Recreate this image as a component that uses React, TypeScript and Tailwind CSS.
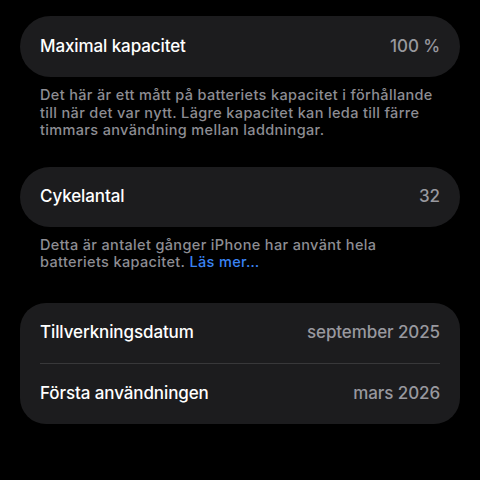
import React from "react";

const font = { fontFamily: "Inter, 'Noto Sans', sans-serif" };

function Row({ label, value, h = "h-[60px]" }: { label: string; value: string; h?: string }) {
    return (
        <div className={`flex items-center justify-between px-5 ${h}`}>
            <span className="text-[17px] font-medium text-white tracking-[-0.1px]">{label}</span>
            <span className="text-[17px] font-medium text-[#98989e] tracking-[-0.1px]">{value}</span>
        </div>
    );
}

export default function App() {
    return (
        <div className="w-[480px] h-[480px] bg-black overflow-hidden px-5 pt-4" style={font}>
            {/* Max capacity */}
            <div className="bg-[#1c1c1e] rounded-full">
                <Row label="Maximal kapacitet" value="100 %" h="h-[61px]" />
            </div>
            <p className="px-5 pt-[9px] text-[14.5px] leading-[17.5px] font-medium tracking-[0.35px] text-[#8d8d93]">
                Det här är ett mått på batteriets kapacitet i förhållande till när det var nytt. Lägre kapacitet kan leda till färre timmars användning mellan laddningar.
            </p>

            {/* Cycle count */}
            <div className="bg-[#1c1c1e] rounded-full mt-[28px]">
                <Row label="Cykelantal" value="32" />
            </div>
            <p className="px-5 pt-[9px] pr-12 text-[14.5px] leading-[17.5px] font-medium tracking-[0.35px] text-[#8d8d93]">
                Detta är antalet gånger iPhone har använt hela batteriets kapacitet.{" "}
                <span className="text-[#3a84f4]">Läs mer…</span>
            </p>

            {/* Dates */}
            <div className="bg-[#1c1c1e] rounded-[26px] mt-[32px]">
                <Row label="Tillverkningsdatum" value="september 2025" />
                <div className="mx-5 h-px bg-[#38383a]" />
                <Row label="Första användningen" value="mars 2026" />
            </div>
        </div>
    );
}
